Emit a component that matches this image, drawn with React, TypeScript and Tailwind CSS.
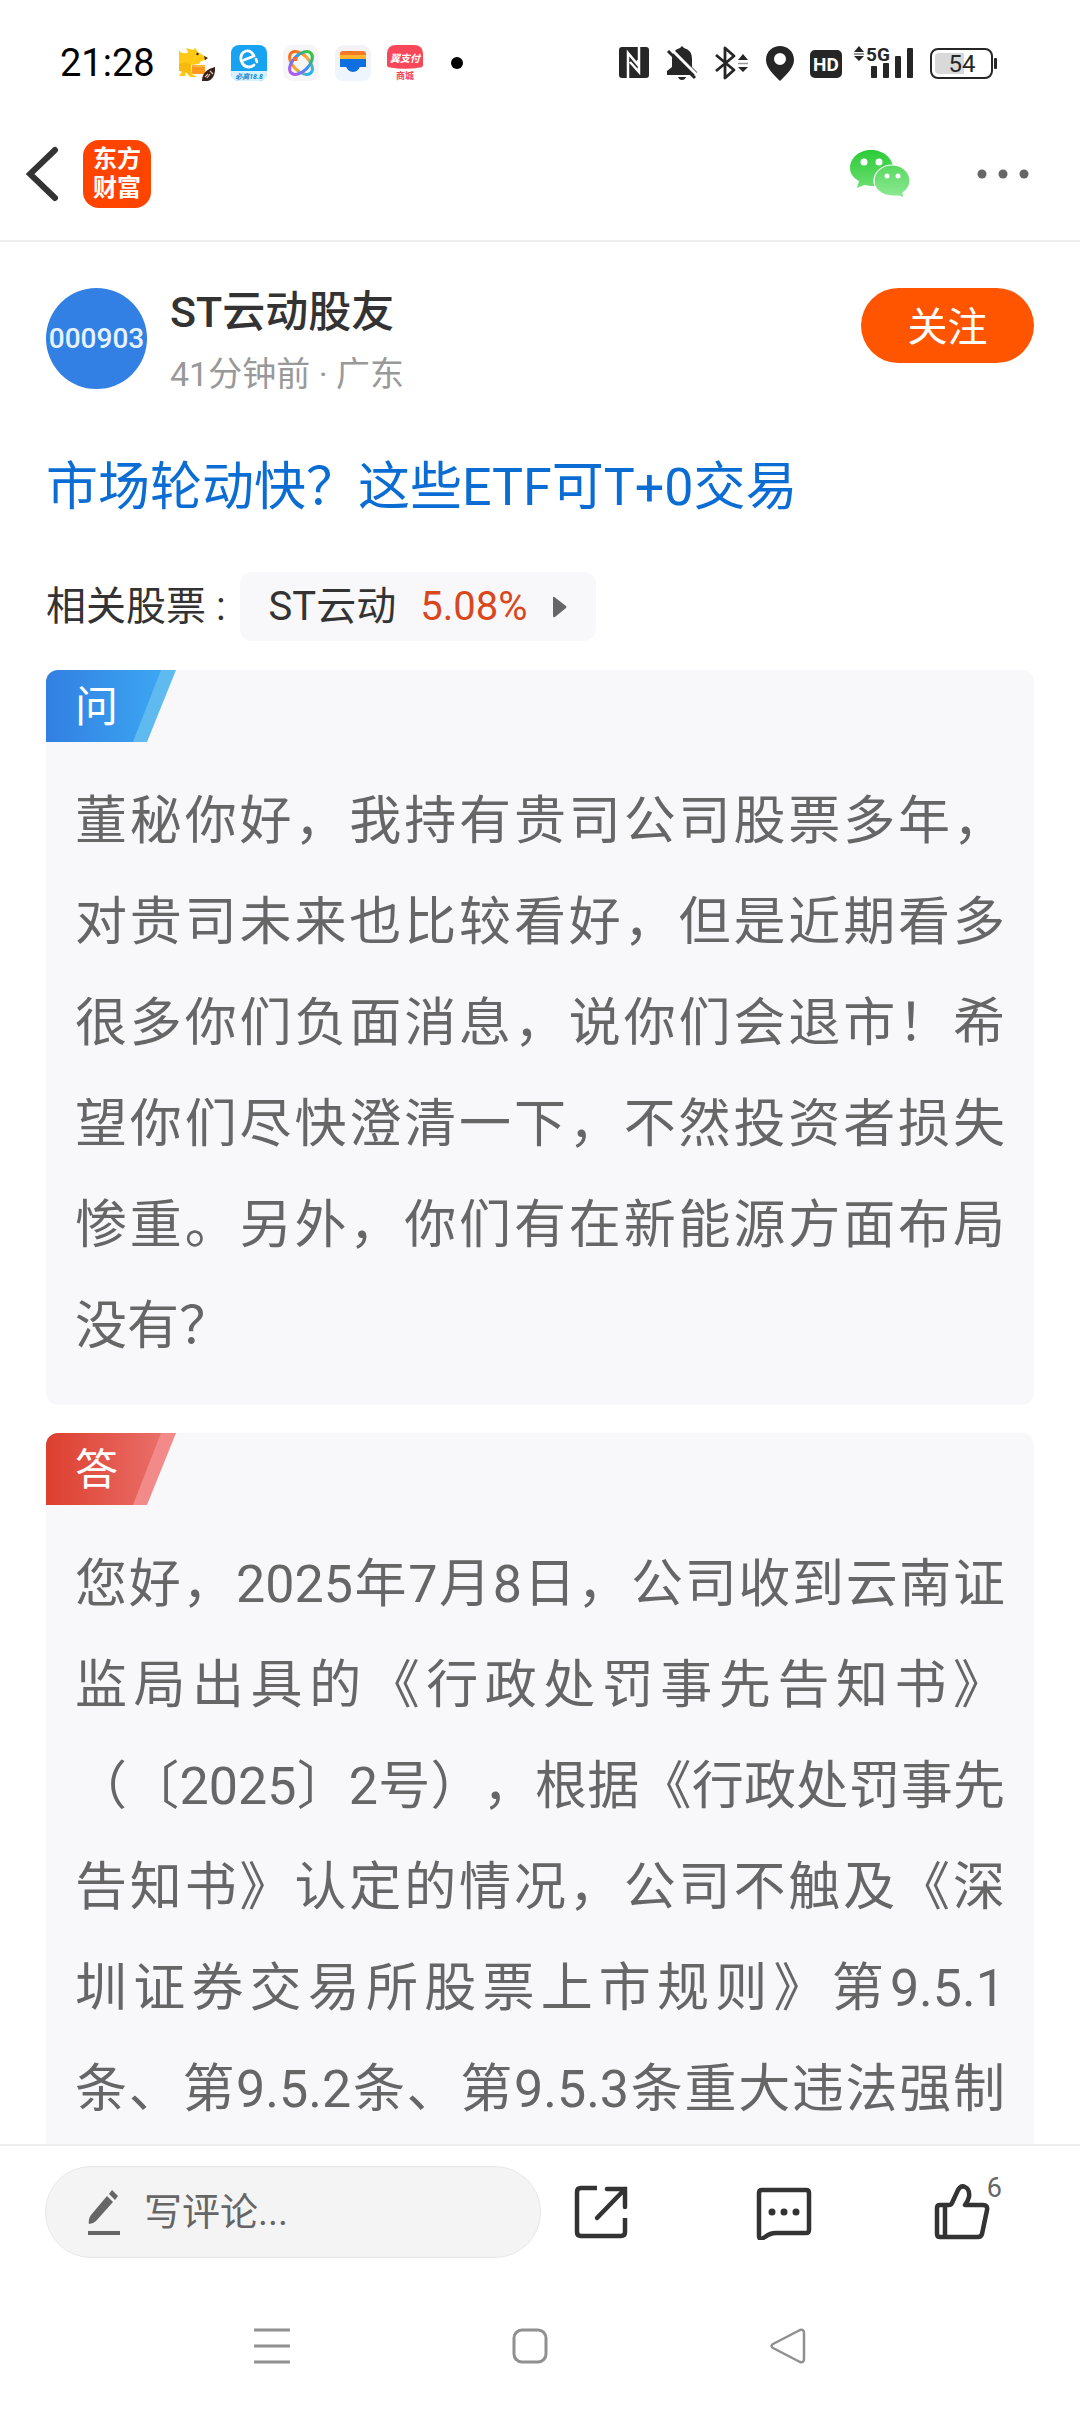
import React from 'react';

const question =
  '董秘你好，我持有贵司公司股票多年，对贵司未来也比较看好，但是近期看多很多你们负面消息，说你们会退市！希望你们尽快澄清一下，不然投资者损失惨重。另外，你们有在新能源方面布局没有？';

const answer =
  '您好，2025年7月8日，公司收到云南证监局出具的《行政处罚事先告知书》（〔2025〕2号），根据《行政处罚事先告知书》认定的情况，公司不触及《深圳证券交易所股票上市规则》第9.5.1条、第9.5.2条、第9.5.3条重大违法强制';

const NotificationIcons: React.FC = () => (
  <div className="flex items-center gap-4">
    {/* kangaroo delivery */}
    <svg className="size-9" viewBox="0 0 36 36">
      <path d="M0 5 Q2 9 8 8 L9 7 L7 3 L14 5 L16 3 L19 7 L27 12 L27 15 L22 16 L20 19 L12 20 L13 29 L18 32 L11 32 L7 27 L6 31 L0 31 L4 25 L0 21 Z" fill="#ffc914" />
      <path d="M0 19 L7 17 L12 20 L11 30 L7 27 L0 26 Z" fill="#f9b80f" />
      <circle cx="18.500" cy="9" r="1.200" fill="#3a2415" />
      <path d="M25 11 L29 13 L26 15 Z" fill="#3a2415" />
      <rect x="13" y="20" width="13" height="9" rx="1" fill="#ff9a1f" />
      <path d="M14 20 L26 20 L26 22 L14 22 Z" fill="#ffb44a" />
      <path d="M23 36 Q23 25 36 22 L36 26 Q35 34 29 36 Z" fill="#3a2018" />
      <path d="M26 32 L29 29 M28 33 L31 29 M31 26 L34 29" stroke="#d9c8b8" strokeWidth="1.200" />
    </svg>
    {/* e delivery */}
    <svg className="size-9" viewBox="0 0 36 36">
      <rect width="36" height="36" rx="8" fill="#17a3f2" />
      <path d="M0 26 H36 V28 Q36 36 28 36 H8 Q0 36 0 28 Z" fill="#d6f1ff" />
      <path d="M13 15 L23 11 Q20 5 15 6 Q9 8 10 15 Q12 22 18 22 Q21 22 23 20" fill="none" stroke="#fff" strokeWidth="2.800" strokeLinecap="round" strokeLinejoin="round" />
      <path d="M25 14 L26 17" stroke="#fff" strokeWidth="2.600" strokeLinecap="round" />
      <text x="18" y="34" textAnchor="middle" fontSize="7" fontWeight="700" fontStyle="italic" fontFamily="Roboto, 'Noto Sans CJK SC', sans-serif" fill="#1583d0">必高18.8</text>
    </svg>
    {/* colourful knot */}
    <svg className="size-9" viewBox="0 0 36 36">
      <defs>
        <linearGradient id="knotA" x1="0" y1="0" x2="1" y2="0">
          <stop offset="0" stopColor="#ff6a1a" />
          <stop offset="0.5" stopColor="#ffa726" />
          <stop offset="1" stopColor="#19b6f5" />
        </linearGradient>
        <linearGradient id="knotB" x1="1" y1="0" x2="0" y2="0">
          <stop offset="0" stopColor="#35c934" />
          <stop offset="0.5" stopColor="#3b8cff" />
          <stop offset="1" stopColor="#b457f0" />
        </linearGradient>
      </defs>
      <rect width="36" height="36" rx="9" fill="#f6f5f7" />
      <ellipse cx="18" cy="18" rx="14" ry="8" transform="rotate(45 18 18)" fill="none" stroke="url(#knotA)" strokeWidth="3" />
      <ellipse cx="18" cy="18" rx="14" ry="8" transform="rotate(-45 18 18)" fill="none" stroke="url(#knotB)" strokeWidth="3" />
      <path d="M10 12 L15 12 L14 16 L11 16 Z" fill="#ff6a2a" />
    </svg>
    {/* wallet */}
    <svg className="size-9" viewBox="0 0 36 36">
      <rect width="36" height="36" rx="9" fill="#f3f3f5" />
      <path d="M5 12 V9 Q5 6 8 6 H28 Q31 6 31 9 V12 Z" fill="#f47a28" />
      <rect x="5" y="10" width="26" height="5" fill="#ffb52e" />
      <path d="M5 14 H31 V22 H25 Q23 27 18 27 Q13 27 11 22 H5 Z" fill="#0d6fe0" />
      <path d="M0 22 H11 Q13 27 18 27 Q23 27 25 22 H36 V27 Q36 36 27 36 H9 Q0 36 0 27 Z" fill="#eff5fc" />
    </svg>
    {/* pay */}
    <svg className="size-9" viewBox="0 0 36 36">
      <path d="M0 20 V9 Q0 0 9 0 H27 Q36 0 36 9 V20 Q36 22 33 22.500 Q18 25 3 22.500 Q0 22 0 20 Z" fill="#f9475a" />
      <text x="18" y="17" textAnchor="middle" fontSize="10" fontWeight="700" fontStyle="italic" fontFamily="'Noto Sans CJK SC', sans-serif" fill="#fff">翼支付</text>
      <text x="18" y="34" textAnchor="middle" fontSize="9" fontWeight="700" fontFamily="'Noto Sans CJK SC', sans-serif" fill="#f9475a">商城</text>
    </svg>
    <span className="ml-3 size-3 rounded-full bg-black" />
  </div>
);

const SystemIcons: React.FC = () => (
  <div className="flex items-center gap-4">
    {/* nfc */}
    <svg className="h-9 w-8" viewBox="0 0 32 36" fill="#262626">
      <rect x="1" y="2" width="30" height="31" rx="3" />
      <path d="M10 33 V8 L20 20 V15 M21 2 V27 L12 17" fill="none" stroke="#fff" strokeWidth="2.500" />
    </svg>
    {/* muted bell */}
    <svg className="h-9 w-8" viewBox="0 0 32 36">
      <path d="M16 1 L18 3 Q26 5 26 14 V22 L31 27 V30 H1 V26 L6 22 V14 Q6 5 14 3 Z" fill="#262626" />
      <path d="M12 32 H20 Q19 35 16 35 Q13 35 12 32 Z" fill="#262626" />
      <path d="M5 4 L33 32" stroke="#fff" strokeWidth="3" />
      <path d="M2 6 L29 33" stroke="#262626" strokeWidth="3" />
    </svg>
    {/* bluetooth */}
    <svg className="h-9 w-9" viewBox="0 0 36 36" fill="none" stroke="#262626" strokeWidth="2.800">
      <path d="M2 10 L20 25 L11 33 V3 L20 11 L2 26" strokeLinejoin="round" />
      <path d="M24 15 L29 9 L34 15 Z M24 22 L29 27 L34 22 Z" fill="#262626" stroke="none" />
      <path d="M24 18.500 H34" stroke="#999" strokeWidth="1.500" />
    </svg>
    {/* location */}
    <svg className="h-9 w-7" viewBox="0 0 28 36">
      <path fillRule="evenodd" d="M14 1 C21 1 28 6 28 15 C28 23 20 30 14 36 C8 30 0 23 0 15 C0 6 7 1 14 1 Z M14 8 A6 6 0 1 0 14 20 A6 6 0 1 0 14 8 Z" fill="#262626" />
    </svg>
    {/* hd */}
    <svg className="h-9 w-8" viewBox="0 0 32 36">
      <rect y="5" width="32" height="28" rx="5" fill="#262626" />
      <text x="16" y="26" textAnchor="middle" fontSize="19" fontWeight="700" fontFamily="Roboto, sans-serif" fill="#fff">HD</text>
    </svg>
    {/* signal */}
    <svg className="-ml-1 h-9 w-15 overflow-visible" viewBox="0 0 60 36" fill="#262626">
      <path d="M0 7 L5 1 L10 7 Z M0 11 L5 16 L10 11 Z" />
      <path d="M0 9 H10" stroke="#777" strokeWidth="1.500" />
      <text x="12" y="16" fontSize="19" fontWeight="700" fontFamily="Roboto, sans-serif">5G</text>
      <rect x="17" y="21" width="6" height="12" rx="1" />
      <rect x="29" y="18" width="6" height="15" rx="1" />
      <rect x="41" y="11" width="6" height="22" rx="1" />
      <rect x="53" y="3" width="6" height="30" rx="1" />
    </svg>
    {/* battery */}
    <svg className="h-9 w-17" viewBox="0 0 68 36">
      <rect x="1" y="4" width="61" height="29" rx="7" fill="none" stroke="#262626" strokeWidth="2" />
      <path d="M9 8 H34 V29 H9 Q5 29 5 25 V12 Q5 8 9 8 Z" fill="#d9d9d9" />
      <rect x="64" y="13" width="3" height="11" rx="1" fill="#262626" />
      <text x="32" y="27" textAnchor="middle" fontSize="24" fontFamily="Roboto, sans-serif" fill="#262626">54</text>
    </svg>
  </div>
);

const WechatIcon: React.FC = () => (
  <svg className="h-12 w-15" viewBox="0 0 60 48">
    <defs>
      <linearGradient id="wxBack" x1="0" y1="0" x2="0" y2="1">
        <stop offset="0" stopColor="#2ccb37" />
        <stop offset="1" stopColor="#6adf72" />
      </linearGradient>
      <linearGradient id="wxFront" x1="0" y1="0" x2="0" y2="1">
        <stop offset="0" stopColor="#58d860" />
        <stop offset="1" stopColor="#8eea94" />
      </linearGradient>
    </defs>
    <path d="M21 0 C33 0 43 8 43 18 C43 28 33 36 21 36 L14 35 L7 38 L9 31 C3 28 0 23 0 18 C0 8 9 0 21 0 Z" fill="url(#wxBack)" />
    <path d="M42 15 C52 15 60 22 60 31 C60 36 57 40 53 43 L54 48 L49 46 C47 46 45 46 42 46 C32 46 24 39 24 31 C24 22 32 15 42 15 Z" fill="url(#wxFront)" stroke="#fff" strokeWidth="1.200" />
    <g fill="#fff">
      <circle cx="14" cy="12" r="3.500" />
      <circle cx="29" cy="12" r="3.500" />
      <circle cx="37" cy="26" r="2.500" />
      <circle cx="48" cy="26" r="2.500" />
    </g>
  </svg>
);

const QuestionTag: React.FC = () => (
  <div className="relative h-[72px] w-[130px]">
    <svg className="absolute inset-0 size-full" viewBox="0 0 130 72">
      <defs>
        <linearGradient id="askTag" x1="0" y1="0" x2="1" y2="0">
          <stop offset="0" stopColor="#327fe2" />
          <stop offset="1" stopColor="#3ca6f2" />
        </linearGradient>
      </defs>
      <path d="M60 0 H130 L101 72 H60 Z" fill="#5fbaf0" />
      <path d="M0 0 H115 L87 72 H0 Z" fill="url(#askTag)" />
    </svg>
    <span className="relative block pl-[29px] text-[43px] leading-[74px] text-white">问</span>
  </div>
);

const AnswerTag: React.FC = () => (
  <div className="relative h-[72px] w-[130px]">
    <svg className="absolute inset-0 size-full" viewBox="0 0 130 72">
      <defs>
        <linearGradient id="answerTag" x1="0" y1="0" x2="1" y2="0">
          <stop offset="0" stopColor="#dd3f2f" />
          <stop offset="1" stopColor="#e96e68" />
        </linearGradient>
      </defs>
      <path d="M60 0 H130 L101 72 H60 Z" fill="#f28a8a" />
      <path d="M0 0 H115 L87 72 H0 Z" fill="url(#answerTag)" />
    </svg>
    <span className="relative block pl-[29px] text-[43px] leading-[74px] text-white">答</span>
  </div>
);

export default function App() {
  return (
    <div className="flex h-screen flex-col bg-white font-[Roboto,'Noto_Sans_CJK_SC',sans-serif] text-[#333]">
      <div className="flex h-[107px] shrink-0 items-center justify-between pt-[18px] pr-[82px] pl-[60px]">
        <div className="flex items-center gap-6">
          <span className="text-[38px] leading-10 text-black">21:28</span>
          <NotificationIcons />
        </div>
        <SystemIcons />
      </div>

      <header className="flex h-[135px] shrink-0 items-center justify-between border-b-2 border-[#eee] pr-[50px] pl-[26px]">
        <div className="flex items-center gap-6">
          <button aria-label="返回">
            <svg className="h-14 w-[33px]" viewBox="0 0 33 56" fill="none" stroke="#333" strokeWidth="6" strokeLinecap="round">
              <path d="M29 4 L4 28 L29 52" />
            </svg>
          </button>
          <a href="#" className="grid size-[68px] place-content-center rounded-2xl bg-[#ff4400] text-center text-2xl leading-[29px] font-bold text-white">
            东方
            <br />
            财富
          </a>
        </div>
        <div className="flex items-center gap-16">
          <button aria-label="微信">
            <WechatIcon />
          </button>
          <button aria-label="更多">
            <svg className="h-3 w-14" viewBox="0 0 56 12" fill="#666">
              <circle cx="8" cy="6" r="4.500" />
              <circle cx="29" cy="6" r="4.500" />
              <circle cx="50" cy="6" r="4.500" />
            </svg>
          </button>
        </div>
      </header>

      <main className="flex min-h-0 flex-1 flex-col overflow-hidden px-[46px] [text-spacing-trim:space-all]">
        <div className="mt-[46px] flex shrink-0 items-start">
          <div className="grid size-[101px] place-content-center rounded-full bg-[#3280e4] text-[28px] font-medium text-[#e6f3ff]">
            000903
          </div>
          <div className="ml-[23px] flex-1">
            <div className="text-[43px] leading-12 font-medium">ST云动股友</div>
            <div className="mt-[14px] text-[34px] leading-12 text-[#999]">41分钟前 · 广东</div>
          </div>
          <button className="h-[75px] w-[173px] rounded-full bg-[#ff5500] pt-1 text-[40px] text-white">关注</button>
        </div>

        <h1 className="mt-[54px] shrink-0 text-[52px] leading-[72px] text-[#0b6dd4]">
          <a href="#">市场轮动快？这些ETF可T+0交易</a>
        </h1>

        <div className="mt-12 flex shrink-0 items-center text-[40px]">
          <span>相关股票 :</span>
          <a href="#" className="ml-[14px] flex h-[69px] items-center rounded-xl bg-[#f8f8fa] pr-7 pl-[29px]">
            <span>ST云动</span>
            <span className="ml-6 text-[#d9481c]">5.08%</span>
            <svg className="ml-6 h-6 w-4" viewBox="0 0 16 24" fill="#666">
              <path d="M1 3 Q1 1 3 2.500 L14 11 Q15 12 14 13 L3 22 Q1 23 1 21 Z" />
            </svg>
          </a>
        </div>

        <section className="mt-[29px] shrink-0 overflow-hidden rounded-xl bg-[#f8f8fa] pb-7">
          <QuestionTag />
          <p className="mt-[29px] px-[29px] text-justify text-[52px] leading-[101px] text-[#666]">{question}</p>
        </section>

        <section className="mt-7 min-h-0 flex-1 overflow-hidden rounded-t-xl bg-[#f8f8fa]">
          <AnswerTag />
          <p className="mt-[29px] px-[29px] text-justify text-[52px] leading-[101px] text-[#666] [text-align-last:justify]">{answer}</p>
        </section>
      </main>

      <footer className="flex shrink-0 items-center border-t-2 border-[#eee] py-5 pr-[78px] pl-[45px]">
        <label className="flex h-[92px] w-[496px] items-center rounded-full border border-[#e8e8e8] bg-[#f4f4f4] pl-[42px]">
          <svg className="h-12 w-8" viewBox="0 0 32 48" fill="#666">
            <path d="M19 8 L25 14 L8 33 Q5 36 1 36 Q0 31 3 27 Z" />
            <path d="M24 2 L30 8 L27 12 L21 6 Z" />
            <rect y="43" width="32" height="4" />
          </svg>
          <input
            aria-label="写评论"
            placeholder="写评论..."
            className="ml-6 w-0 flex-1 bg-transparent text-[38px] outline-none placeholder:text-[#666]"
          />
        </label>
        <div className="flex flex-1 items-center justify-between pl-8">
          <button aria-label="分享">
            <svg className="size-14" viewBox="0 0 56 56" fill="none" stroke="#333" strokeWidth="4.500">
              <path d="M24 4 H8 Q4 4 4 8 V48 Q4 52 8 52 H48 Q52 52 52 48 V34" />
              <path d="M34 5 H52 V23 M52 5 L24 34" strokeLinecap="round" />
            </svg>
          </button>
          <button aria-label="评论" className="pl-1">
            <svg className="size-14" viewBox="0 0 56 56" fill="none" stroke="#333" strokeWidth="4.500">
              <path d="M6 6 H50 Q53 6 53 9 V46 Q53 49 50 49 H20 Q14 49 9 53 Q3 57 3 52 V9 Q3 6 6 6 Z" strokeLinejoin="round" />
              <g fill="#333" stroke="none">
                <circle cx="16" cy="28" r="3.500" />
                <circle cx="28" cy="28" r="3.500" />
                <circle cx="40" cy="28" r="3.500" />
              </g>
            </svg>
          </button>
          <button aria-label="点赞" className="relative pr-3">
            <svg className="size-14" viewBox="0 0 56 56" fill="none" stroke="#333" strokeWidth="4.500" strokeLinejoin="round">
              <path d="M6 21 H15 Q17 21 18 19 L24 6 Q27 1 31 3 Q36 5 35 13 Q34 17 31 21 H49 Q54 21 53 26 L48 50 Q47 53 44 53 H6 Q3 53 3 50 V24 Q3 21 6 21 Z" />
              <path d="M11 21 V53" />
            </svg>
            <span className="absolute -top-3 right-0 text-[27px] leading-8 text-[#666]">6</span>
          </button>
        </div>
      </footer>

      <nav className="flex h-[134px] shrink-0 items-start justify-center gap-[222px] pt-[50px] pr-5">
        <button aria-label="任务">
          <svg className="size-9" viewBox="0 0 36 36" stroke="#909090" strokeWidth="3">
            <path d="M0 2 H36 M0 18 H36 M0 34 H36" />
          </svg>
        </button>
        <button aria-label="主页">
          <svg className="size-9" viewBox="0 0 36 36" fill="none" stroke="#909090" strokeWidth="3">
            <rect x="2" y="2" width="32" height="32" rx="8" />
          </svg>
        </button>
        <button aria-label="后退">
          <svg className="size-9" viewBox="0 0 36 36" fill="none" stroke="#909090" strokeWidth="2.500" strokeLinejoin="round">
            <path d="M30 2 Q34 1 34 5 V31 Q34 35 30 34 L3 20 Q0 18 3 16 Z" />
          </svg>
        </button>
      </nav>
    </div>
  );
}
